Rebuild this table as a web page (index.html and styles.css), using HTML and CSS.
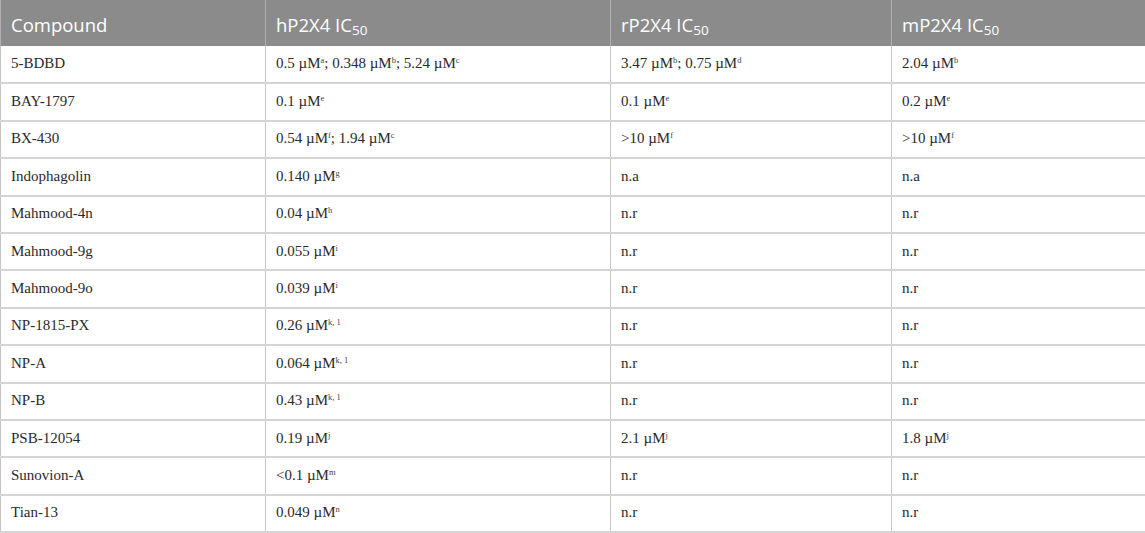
FILE: index.html
```html
<!DOCTYPE html>
<html>
<head>
<meta charset="utf-8">
<link rel="stylesheet" href="styles.css">
</head>
<body>
<table class="data">
  <colgroup>
    <col class="c1"><col class="c2"><col class="c3"><col class="c4">
  </colgroup>
  <thead>
    <tr>
      <th>Compound</th>
      <th>hP2X4 IC<sub>50</sub></th>
      <th>rP2X4 IC<sub>50</sub></th>
      <th>mP2X4 IC<sub>50</sub></th>
    </tr>
  </thead>
  <tbody>
    <tr><td>5-BDBD</td><td>0.5 µM<sup>a</sup>; 0.348 µM<sup>b</sup>; 5.24 µM<sup>c</sup></td><td>3.47 µM<sup>b</sup>; 0.75 µM<sup>d</sup></td><td>2.04 µM<sup>b</sup></td></tr>
    <tr><td>BAY-1797</td><td>0.1 µM<sup>e</sup></td><td>0.1 µM<sup>e</sup></td><td>0.2 µM<sup>e</sup></td></tr>
    <tr><td>BX-430</td><td>0.54 µM<sup>f</sup>; 1.94 µM<sup>c</sup></td><td>&gt;10 µM<sup>f</sup></td><td>&gt;10 µM<sup>f</sup></td></tr>
    <tr><td>Indophagolin</td><td>0.140 µM<sup>g</sup></td><td>n.a</td><td>n.a</td></tr>
    <tr><td>Mahmood-4n</td><td>0.04 µM<sup>h</sup></td><td>n.r</td><td>n.r</td></tr>
    <tr><td>Mahmood-9g</td><td>0.055 µM<sup>i</sup></td><td>n.r</td><td>n.r</td></tr>
    <tr><td>Mahmood-9o</td><td>0.039 µM<sup>i</sup></td><td>n.r</td><td>n.r</td></tr>
    <tr><td>NP-1815-PX</td><td>0.26 µM<sup>k, 1</sup></td><td>n.r</td><td>n.r</td></tr>
    <tr><td>NP-A</td><td>0.064 µM<sup>k, 1</sup></td><td>n.r</td><td>n.r</td></tr>
    <tr><td>NP-B</td><td>0.43 µM<sup>k, 1</sup></td><td>n.r</td><td>n.r</td></tr>
    <tr><td>PSB-12054</td><td>0.19 µM<sup>j</sup></td><td>2.1 µM<sup>j</sup></td><td>1.8 µM<sup>j</sup></td></tr>
    <tr><td>Sunovion-A</td><td>&lt;0.1 µM<sup>m</sup></td><td>n.r</td><td>n.r</td></tr>
    <tr><td>Tian-13</td><td>0.049 µM<sup>n</sup></td><td>n.r</td><td>n.r</td></tr>
  </tbody>
</table>
</body>
</html>
```

FILE: styles.css
```css
html, body {
  margin: 0;
  padding: 0;
  background: #ffffff;
}

.data {
  width: 1145px;
  border-collapse: collapse;
  table-layout: fixed;
  border-left: 1px solid #b8b8b8;
  border-right: 1px solid #b8b8b8;
}

.c1 { width: 265px; }
.c2 { width: 345px; }
.c3 { width: 281px; }
.c4 { width: 254px; }

.data th {
  background: #8b8b8b;
  color: #ffffff;
  font-family: "Open Sans", "Noto Sans", sans-serif;
  font-weight: 400;
  font-size: 18.5px;
  text-align: left;
  height: 46px;
  padding: 3px 10px 0;
  box-sizing: border-box;
  border-left: 1px solid #b0b0b0;
  vertical-align: middle;
}

.data th sub {
  font-size: 13.5px;
  vertical-align: -3px;
  line-height: 0;
}

.data td {
  font-family: "Liberation Serif", "Times New Roman", serif;
  font-size: 15px;
  color: #2a2a2a;
  height: 37.4px;
  padding: 0 10px 1px;
  box-sizing: border-box;
  border-left: 1px solid #c4c4c4;
  border-bottom: 2px solid #d4d4d4;
  vertical-align: middle;
  white-space: nowrap;
}

.data td sup {
  font-size: 8.5px;
  vertical-align: 5px;
  line-height: 0;
  color: #444;
}
```
